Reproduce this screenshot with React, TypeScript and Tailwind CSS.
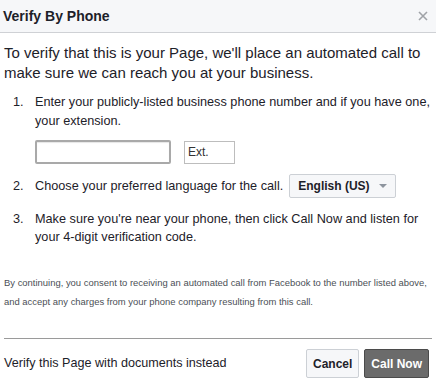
import React from "react";

export default function App() {
  return (
    <div className="w-[436px] h-[387px] bg-white text-[#1d2129] overflow-hidden" style={{ fontFamily: '"Liberation Sans", Arial, sans-serif' }}>
      <div className="h-[33px] bg-[#f6f7f9] border-b border-[#cfd1d5] flex items-center justify-between pl-[3px] pr-[6px]">
        <div className="text-[14px] font-bold text-[#1d2129]">Verify By Phone</div>
        <svg width="10" height="10" viewBox="0 0 10 10" className="mr-[2px]">
          <path d="M1 1 L9 9 M9 1 L1 9" stroke="#a0a3a8" strokeWidth="1.6" />
        </svg>
      </div>
      <div className="px-[4px] pt-[10px]">
        <p className="text-[15px] leading-[20px]">
          To verify that this is your Page, we'll place an automated call to make sure we can reach you at your business.
        </p>
        <div className="mt-[10px] text-[12.7px] leading-[19px]">
          <div className="flex">
            <span className="w-[31px] pl-[9px] shrink-0">1.</span>
            <div>
              <div>Enter your publicly-listed business phone number and if you have one, your extension.</div>
              <div className="flex items-center gap-[13px] mt-[9px]">
                <div className="w-[136px] h-[24px] border-2 border-[#a9a9a9] rounded-[2px] bg-white shadow-[inset_0_1px_1px_rgba(0,0,0,0.1)]"></div>
                <div className="w-[51px] h-[23px] border border-[#bdbdbd] bg-white text-[12px] leading-[21px] pl-[3px] text-[#333]">Ext.</div>
              </div>
            </div>
          </div>
          <div className="flex items-center mt-[10px]">
            <span className="w-[31px] pl-[9px] shrink-0">2.</span>
            <span>Choose your preferred language for the call.</span>
            <div className="ml-[6px] h-[24px] px-[8px] border border-[#ccd0d5] rounded-[2px] bg-[#f6f7f9] flex items-center gap-[9px]">
              <span className="font-bold text-[12px]">English (US)</span>
              <svg width="8" height="5" viewBox="0 0 8 5"><path d="M0 0 L8 0 L4 4 Z" fill="#8d949e" /></svg>
            </div>
          </div>
          <div className="flex mt-[12px] leading-[18px]">
            <span className="w-[31px] pl-[9px] shrink-0">3.</span>
            <span>Make sure you're near your phone, then click Call Now and listen for your 4-digit verification code.</span>
          </div>
        </div>
        <p className="mt-[27px] text-[9.45px] leading-[19px] text-[#4b4f56]">
          By continuing, you consent to receiving an automated call from Facebook to the number listed above, and accept any charges from your phone company resulting from this call.
        </p>
        <div className="mt-[27px] border-t border-[#9a9a9a]"></div>
        <div className="flex items-center justify-between pt-[10px]">
          <span className="text-[12.6px] text-[#1d2129]">Verify this Page with documents instead</span>
          <div className="flex gap-[5px] mr-[3px]">
            <button className="h-[29px] px-[6px] border border-[#ccd0d5] rounded-[2px] bg-[#f6f7f9] text-[12px] font-bold text-[#1d2129]">Cancel</button>
            <button className="h-[29px] px-[6px] border border-[#4b4b4b] rounded-[2px] bg-[#6b6b6b] text-[12px] font-bold text-white">Call Now</button>
          </div>
        </div>
      </div>
    </div>
  );
}
